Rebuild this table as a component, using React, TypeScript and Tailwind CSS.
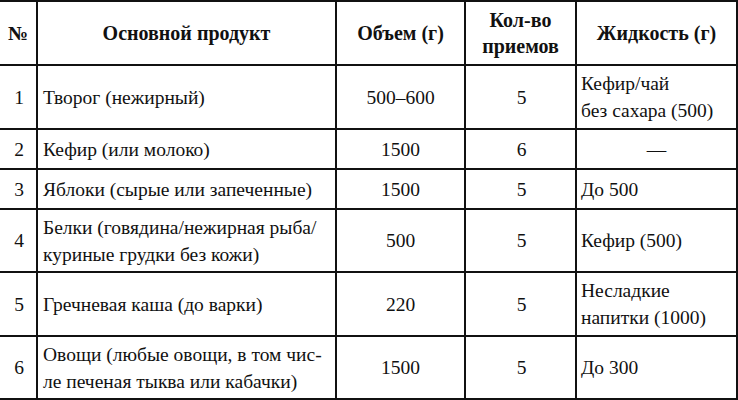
const HEAD = ['№', 'Основной продукт', 'Объем (г)', 'Кол-во\nприемов', 'Жидкость (г)'];

type Row = {
  n: string;
  product: string[];
  amount: string;
  times: string;
  liquid: string[];
  liquidCenter?: boolean;
  h: string;
};

const ROWS: Row[] = [
  { n: '1', product: ['Творог (нежирный)'], amount: '500–600', times: '5', liquid: ['Кефир/чай', 'без сахара (500)'], h: 'h-[64px]' },
  { n: '2', product: ['Кефир (или молоко)'], amount: '1500', times: '6', liquid: ['—'], liquidCenter: true, h: 'h-[40px]' },
  { n: '3', product: ['Яблоки (сырые или запеченные)'], amount: '1500', times: '5', liquid: ['До 500'], h: 'h-[40px]' },
  { n: '4', product: ['Белки (говядина/нежирная рыба/', 'куриные грудки без кожи)'], amount: '500', times: '5', liquid: ['Кефир (500)'], h: 'h-[63px]' },
  { n: '5', product: ['Гречневая каша (до варки)'], amount: '220', times: '5', liquid: ['Несладкие', 'напитки (1000)'], h: 'h-[64px]' },
  { n: '6', product: ['Овощи (любые овощи, в том чис-', 'ле печеная тыква или кабачки)'], amount: '1500', times: '5', liquid: ['До 300'], h: 'h-[63px]' },
];

const cell = "flex items-center border-r-2 border-b-2 border-[#111] font-[Liberation_Serif]";

function Lines({ lines }: { lines: string[] }) {
  return (
    <div>
      {lines.map((l, i) => (
        <div key={i}>{l}</div>
      ))}
    </div>
  );
}

export default function App() {
  return (
    <div className="w-[738px] h-[400px] bg-white overflow-hidden text-[#111] font-serif">
      <div className="grid grid-cols-[38px_299px_129px_111px_161px] border-t-2 border-[#111]">
        {/* header */}
        {HEAD.map((t, i) => (
          <div key={i} className={`${cell} h-[64px] justify-center text-center font-bold text-[20px] leading-[26px]`}>
            <Lines lines={t.split('\n')} />
          </div>
        ))}

        {ROWS.map((r) => (
          <div key={r.n} className="contents text-[19.5px] leading-[27px]">
            <div className={`${cell} ${r.h} justify-center pl-[2px]`}>{r.n}</div>
            <div className={`${cell} ${r.h} pl-[5px]`}>
              <Lines lines={r.product} />
            </div>
            <div className={`${cell} ${r.h} justify-center`}>{r.amount}</div>
            <div className={`${cell} ${r.h} justify-center pl-[2px]`}>{r.times}</div>
            <div className={`${cell} ${r.h} ${r.liquidCenter ? 'justify-center' : 'pl-[4px]'}`}>
              <Lines lines={r.liquid} />
            </div>
          </div>
        ))}
      </div>
    </div>
  );
}
